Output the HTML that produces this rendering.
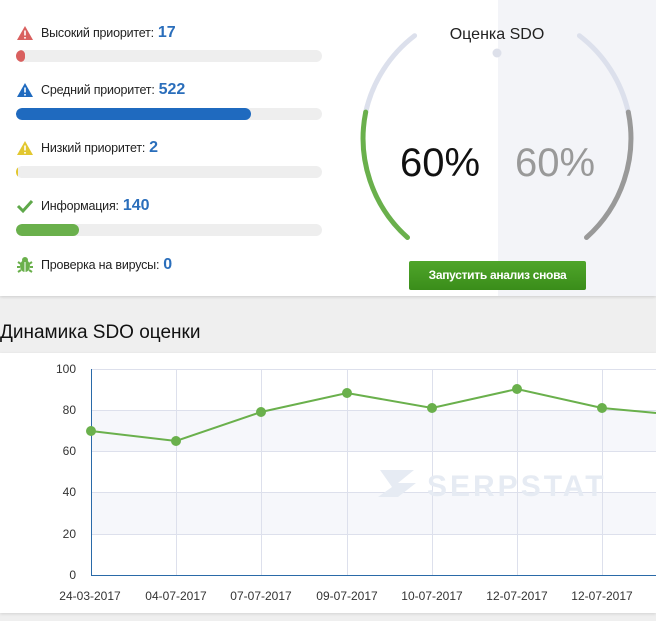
<!DOCTYPE html>
<html><head><meta charset="utf-8"><style>
*{margin:0;padding:0;box-sizing:border-box}
body{width:656px;height:621px;overflow:hidden;background:#efefef;font-family:"Liberation Sans",sans-serif;position:relative}
.top{position:absolute;left:0;top:0;width:656px;height:296px;background:#fff;box-shadow:0 1px 3px rgba(0,0,0,.15)}
.grayhalf{position:absolute;left:498px;top:0;width:158px;height:296px;background:#f3f4f8}
.row{position:absolute;left:16px;font-size:12.5px;color:#222;display:flex;align-items:center;letter-spacing:-0.2px}
.row svg{margin-right:7px}
.num{color:#2a6ebb;font-weight:bold;font-size:16px;margin-left:4px;letter-spacing:0}
.bar{position:absolute;left:16px;width:306px;height:12px;border-radius:6px;background:#eeeeee;overflow:hidden}
.bar i{display:block;height:12px;border-radius:6px}
.btn{position:absolute;left:409px;top:261px;width:177px;height:29px;background:linear-gradient(#4fa52a,#3a8d1a);border-radius:2px;color:#fff;font-size:12px;font-weight:bold;text-align:center;line-height:29px;letter-spacing:-0.3px}
.hdr{position:absolute;left:0;top:322px;font-size:19px;color:#111}
.chart{position:absolute;left:0;top:353px;width:656px;height:260px;background:#fff;box-shadow:0 1px 3px rgba(0,0,0,.12)}
</style></head><body>
<div class="top">
<div class="grayhalf"></div>
<div class="row" style="top:24px"><svg width="18" height="16" viewBox="0 0 18 16"><path d="M9 1L17 15H1Z" fill="#d9605f"/><rect x="8.2" y="5.5" width="1.6" height="5" fill="#fff"/><rect x="8.2" y="12" width="1.6" height="1.6" fill="#fff"/></svg>Высокий приоритет:<span class="num">17</span></div>
<div class="bar" style="top:50px"><i style="width:9px;background:#d9605f"></i></div>
<div class="row" style="top:81px"><svg width="18" height="16" viewBox="0 0 18 16"><path d="M9 1L17 15H1Z" fill="#1f6abf"/><rect x="8.2" y="5.5" width="1.6" height="5" fill="#fff"/><rect x="8.2" y="12" width="1.6" height="1.6" fill="#fff"/></svg>Средний приоритет:<span class="num">522</span></div>
<div class="bar" style="top:108px"><i style="width:235px;background:#1f6abf"></i></div>
<div class="row" style="top:139px"><svg width="18" height="16" viewBox="0 0 18 16"><path d="M9 1L17 15H1Z" fill="#e2c72f"/><rect x="8.2" y="5.5" width="1.6" height="5" fill="#fff"/><rect x="8.2" y="12" width="1.6" height="1.6" fill="#fff"/></svg>Низкий приоритет:<span class="num">2</span></div>
<div class="bar" style="top:166px"><i style="width:2px;background:#e2c72f"></i></div>
<div class="row" style="top:197px"><svg width="18" height="16" viewBox="0 0 18 16"><path d="M2 8L7 13L16 3" stroke="#5fa84a" stroke-width="3" fill="none"/></svg>Информация:<span class="num">140</span></div>
<div class="bar" style="top:224px"><i style="width:63px;background:#6ab04c"></i></div>
<div class="row" style="top:256px"><svg width="18" height="18" viewBox="0 0 18 18"><ellipse cx="9" cy="10" rx="5" ry="6" fill="#6ab04c"/><circle cx="9" cy="4" r="3" fill="#6ab04c"/><path d="M2 6L5 8M16 6L13 8M1 11H4M17 11H14M2 16L5 14M16 16L13 14" stroke="#6ab04c" stroke-width="2"/><path d="M9 6V16" stroke="#fff" stroke-width="1"/></svg>Проверка на вирусы:<span class="num">0</span></div>
<svg style="position:absolute;left:0;top:0" width="656" height="296">
<path d="M414.6 35.7A133 133 0 0 0 365.7 112.1" stroke="#dce0ec" stroke-width="5" fill="none" stroke-linecap="round"/>
<path d="M365.7 112.1A133 133 0 0 0 407.5 237.5" stroke="#6ab04c" stroke-width="5" fill="none" stroke-linecap="round"/>
<path d="M579.4 35.7A133 133 0 0 1 628.3 112.1" stroke="#dce0ec" stroke-width="5" fill="none" stroke-linecap="round"/>
<path d="M628.3 112.1A133 133 0 0 1 586.5 237.5" stroke="#999" stroke-width="5" fill="none" stroke-linecap="round"/>
<circle cx="497" cy="53" r="4.5" fill="#dde0ea"/>
<text x="497" y="39" text-anchor="middle" font-size="16" fill="#222" font-family="Liberation Sans">Оценка SDO</text>
<text x="440" y="176" text-anchor="middle" font-size="40" fill="#111" font-family="Liberation Sans">60%</text>
<text x="555" y="176" text-anchor="middle" font-size="40" fill="#999" font-family="Liberation Sans">60%</text>
</svg>
<div class="btn">Запустить анализ снова</div>
</div>
<div class="hdr">Динамика SDO оценки</div>
<div class="chart"></div>
<svg style="position:absolute;left:0;top:0" width="656" height="621" font-family="Liberation Sans" font-size="12" fill="#333">
<rect x="91" y="410" width="565" height="41" fill="#f6f7fb"/>
<rect x="91" y="492" width="565" height="42" fill="#f6f7fb"/>
<g stroke="#dde0ec" stroke-width="1">
<line x1="91" y1="369.5" x2="656" y2="369.5"/><line x1="91" y1="410.5" x2="656" y2="410.5"/><line x1="91" y1="451.5" x2="656" y2="451.5"/><line x1="91" y1="492.5" x2="656" y2="492.5"/><line x1="91" y1="534.5" x2="656" y2="534.5"/>
<line x1="176.5" y1="369" x2="176.5" y2="575"/><line x1="261.5" y1="369" x2="261.5" y2="575"/><line x1="347.5" y1="369" x2="347.5" y2="575"/><line x1="432.5" y1="369" x2="432.5" y2="575"/><line x1="517.5" y1="369" x2="517.5" y2="575"/><line x1="602.5" y1="369" x2="602.5" y2="575"/>
</g>
<text x="427" y="496" font-size="30" font-weight="bold" fill="#e6ebf3" letter-spacing="3">SERPSTAT</text>
<path d="M380 470h34l-16 13h18l-18 14h-20l14-10z" fill="#e6ebf3"/>
<line x1="91.5" y1="369" x2="91.5" y2="575" stroke="#2a6aa8"/>
<line x1="91" y1="575.5" x2="656" y2="575.5" stroke="#2a6aa8"/>
<g text-anchor="end"><text x="76" y="373">100</text><text x="76" y="414">80</text><text x="76" y="455">60</text><text x="76" y="496">40</text><text x="76" y="538">20</text><text x="76" y="579">0</text></g>
<g text-anchor="middle"><text x="90" y="600">24-03-2017</text><text x="176" y="600">04-07-2017</text><text x="261" y="600">07-07-2017</text><text x="347" y="600">09-07-2017</text><text x="432" y="600">10-07-2017</text><text x="517" y="600">12-07-2017</text><text x="602" y="600">12-07-2017</text></g>
<polyline points="91,431 176,441 261,412 347,393 432,408 517,389 602,408 656,413" fill="none" stroke="#6ab04c" stroke-width="2"/>
<g fill="#6ab04c"><circle cx="91" cy="431" r="5"/><circle cx="176" cy="441" r="5"/><circle cx="261" cy="412" r="5"/><circle cx="347" cy="393" r="5"/><circle cx="432" cy="408" r="5"/><circle cx="517" cy="389" r="5"/><circle cx="602" cy="408" r="5"/></g>
</svg>
</body></html>
